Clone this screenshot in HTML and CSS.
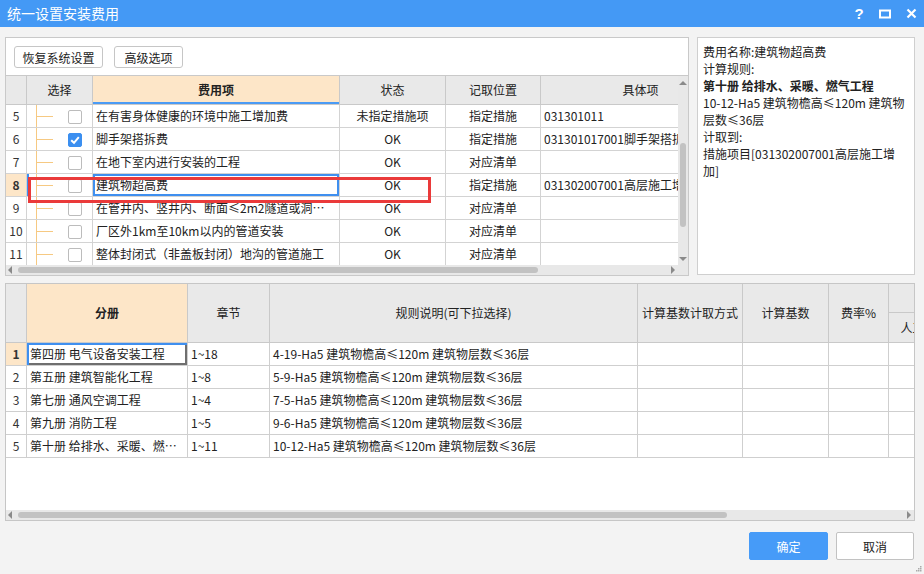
FILE: index.html
```html
<!DOCTYPE html>
<html lang="zh-CN">
<head>
<meta charset="utf-8">
<title>统一设置安装费用</title>
<link rel="stylesheet" href="styles.css">
</head>
<body>
<div class="dialog">
  <div class="titlebar">
    <span class="title">统一设置安装费用</span>
    <div class="win-btns">
      <span class="wbtn help">?</span>
      <span class="wbtn"><svg width="12" height="10" viewBox="0 0 12 10"><rect x="1" y="1.5" width="10" height="7" fill="none" stroke="#fff" stroke-width="2"/></svg></span>
      <span class="wbtn"><svg width="11" height="11" viewBox="0 0 11 11"><path d="M1.5 1.5 L9.5 9.5 M9.5 1.5 L1.5 9.5" stroke="#fff" stroke-width="2.2" fill="none"/></svg></span>
    </div>
  </div>
  <div class="content">
    <div class="top">
      <div class="left-panel">
        <div class="toolbar">
          <button class="btn btn-restore">恢复系统设置</button>
          <button class="btn btn-adv">高级选项</button>
        </div>
        <div class="grid-area up-area">
          <div class="viewport">
            <table class="grid g-up">
              <colgroup><col class="u-num"><col class="u-sel"><col class="u-name"><col class="u-st"><col class="u-pos"><col class="u-item"></colgroup>
              <thead>
                <tr class="hr"><th class="num"></th><th>选择</th><th class="hl hl-line">费用项</th><th>状态</th><th>记取位置</th><th>具体项</th></tr>
              </thead>
              <tbody>
                <tr><td class="num">5</td><td class="sel"><span class="cb"></span></td><td>在有害身体健康的环境中施工增加费</td><td class="c">未指定措施项</td><td class="c">指定措施</td><td>031301011</td></tr>
                <tr><td class="num">6</td><td class="sel"><span class="cb on"><svg width="14" height="14" viewBox="0 0 14 14"><path d="M3.2 7.2 L6 9.8 L10.8 4.2" stroke="#fff" stroke-width="2" fill="none"/></svg></span></td><td>脚手架搭拆费</td><td class="c">OK</td><td class="c">指定措施</td><td>031301017001脚手架搭拆费</td></tr>
                <tr><td class="num">7</td><td class="sel"><span class="cb"></span></td><td>在地下室内进行安装的工程</td><td class="c">OK</td><td class="c">对应清单</td><td></td></tr>
                <tr class="cur"><td class="num cur-num">8</td><td class="sel cur-sel"><span class="cb"></span></td><td class="cur-cell">建筑物超高费</td><td class="c">OK</td><td class="c">指定措施</td><td>031302007001高层施工增加费</td></tr>
                <tr><td class="num">9</td><td class="sel"><span class="cb"></span></td><td>在管井内、竖井内、断面≤2m2隧道或洞内进行安装的工程</td><td class="c">OK</td><td class="c">对应清单</td><td></td></tr>
                <tr><td class="num">10</td><td class="sel"><span class="cb"></span></td><td>厂区外1km至10km以内的管道安装</td><td class="c">OK</td><td class="c">对应清单</td><td></td></tr>
                <tr><td class="num">11</td><td class="sel"><span class="cb"></span></td><td>整体封闭式（非盖板封闭）地沟的管道施工</td><td class="c">OK</td><td class="c">对应清单</td><td></td></tr>
              </tbody>
            </table>
          </div>
          <div class="vscroll">
            <span class="arr-up"></span>
            <span class="vthumb"></span>
            <span class="vspacer"></span>
            <span class="arr-down"></span>
          </div>
          <div class="hscroll up-h">
            <span class="arr-left"></span>
            <span class="hthumb"></span>
            <span class="hspacer"></span>
            <span class="arr-right"></span>
          </div>
          <div class="corner"></div>
        </div>
        <div class="red-box"></div>
      </div>
      <div class="info-panel">
        <div>费用名称:建筑物超高费</div>
        <div>计算规则:</div>
        <div class="b">第十册 给排水、采暖、燃气工程</div>
        <div>10-12-Ha5 建筑物檐高≤120m 建筑物</div>
        <div>层数≤36层</div>
        <div>计取到:</div>
        <div>措施项目[031302007001高层施工增</div>
        <div>加]</div>
      </div>
    </div>

    <div class="lower">
      <div class="grid-area low-area">
        <div class="viewport">
          <table class="grid g-low">
            <colgroup><col class="l-num"><col class="l-book"><col class="l-ch"><col class="l-rule"><col class="l-way"><col class="l-base"><col class="l-rate"><col class="l-sub"><col class="l-sub"><col class="l-sub"></colgroup>
            <thead>
              <tr class="h1"><th class="num" rowspan="2"></th><th class="hl" rowspan="2">分册</th><th rowspan="2">章节</th><th rowspan="2">规则说明(可下拉选择)</th><th rowspan="2">计算基数计取方式</th><th rowspan="2">计算基数</th><th rowspan="2">费率%</th><th colspan="3">其中</th></tr>
              <tr class="h2"><th>人工费</th><th>材料费</th><th>机械费</th></tr>
            </thead>
            <tbody>
              <tr><td class="num cur-num">1</td><td class="cur-cell2">第四册 电气设备安装工程</td><td>1~18</td><td>4-19-Ha5 建筑物檐高≤120m 建筑物层数≤36层</td><td></td><td></td><td></td><td></td><td></td><td></td></tr>
              <tr><td class="num">2</td><td>第五册 建筑智能化工程</td><td>1~8</td><td>5-9-Ha5 建筑物檐高≤120m 建筑物层数≤36层</td><td></td><td></td><td></td><td></td><td></td><td></td></tr>
              <tr><td class="num">3</td><td>第七册 通风空调工程</td><td>1~4</td><td>7-5-Ha5 建筑物檐高≤120m 建筑物层数≤36层</td><td></td><td></td><td></td><td></td><td></td><td></td></tr>
              <tr><td class="num">4</td><td>第九册 消防工程</td><td>1~5</td><td>9-6-Ha5 建筑物檐高≤120m 建筑物层数≤36层</td><td></td><td></td><td></td><td></td><td></td><td></td></tr>
              <tr><td class="num">5</td><td>第十册 给排水、采暖、燃气工程</td><td>1~11</td><td>10-12-Ha5 建筑物檐高≤120m 建筑物层数≤36层</td><td></td><td></td><td></td><td></td><td></td><td></td></tr>
            </tbody>
          </table>
        </div>
        <div class="hscroll low-h">
          <span class="arr-left"></span>
          <span class="hthumb"></span>
          <span class="hspacer"></span>
          <span class="arr-right"></span>
        </div>
      </div>
    </div>

    <div class="footer">
      <button class="btn primary">确定</button>
      <button class="btn cancel">取消</button>
    </div>
  </div>
  <svg class="grip" width="6" height="6" viewBox="0 0 6 6"><rect x="4" y="0" width="1.5" height="1.5" fill="#aaa"/><rect x="2" y="2" width="1.5" height="1.5" fill="#aaa"/><rect x="4" y="2" width="1.5" height="1.5" fill="#aaa"/><rect x="0" y="4" width="1.5" height="1.5" fill="#aaa"/><rect x="2" y="4" width="1.5" height="1.5" fill="#aaa"/><rect x="4" y="4" width="1.5" height="1.5" fill="#aaa"/></svg>
</div>
</body>
</html>
```
FILE: styles.css
```css
* { box-sizing: border-box; }
html, body { margin: 0; padding: 0; }
body {
  width: 924px; height: 574px; overflow: hidden;
  background: #f3f3f3;
  font-family: "Noto Sans CJK SC", "Noto Sans", sans-serif;
  font-size: 12px; color: #222;
}
.dialog { position: relative; width: 924px; height: 574px; display: flex; flex-direction: column; }

/* title bar */
.titlebar { height: 27px; flex: none; background: #4499f5; color: #fff; display: flex; align-items: center; padding-left: 7px; }
.title { flex: 1; font-size: 14px; line-height: 27px; }
.win-btns { display: flex; height: 27px; }
.wbtn { width: 26px; height: 27px; display: flex; align-items: center; justify-content: center; }
.wbtn.help { font-family: "Liberation Sans", sans-serif; font-weight: bold; font-size: 15px; }

.content { flex: 1; display: flex; flex-direction: column; padding: 10px 9px 0 5px; }
.top { display: flex; gap: 8px; align-items: flex-start; height: 239px; flex: none; }

/* left panel */
.left-panel { position: relative; width: 684px; height: 239px; border: 1px solid #c9c9c9; background: #fff; display: flex; flex-direction: column; }
.toolbar { height: 38px; flex: none; border-bottom: 1px solid #c9c9c9; display: flex; gap: 11px; padding: 8px 0 0 8px; background: #fff; }
.btn {
  font-family: inherit; font-size: 12px; color: #222; height: 22px;
  background: #fff; border: 1px solid #c6c6c6; border-radius: 3px; padding: 0;
  display: flex; align-items: center; justify-content: center;
}
.btn-restore { width: 89px; }
.btn-adv { width: 69px; }

.grid-area { display: grid; background: #e8e8e8; }
.up-area { grid-template-columns: 672px 10px; grid-template-rows: 189px 10px; }
.low-area { grid-template-columns: 908px; grid-template-rows: 226px 10px; }
.viewport { overflow: hidden; background: #fff; }

/* grids */
.grid { border-collapse: separate; border-spacing: 0; table-layout: fixed; }
.grid th, .grid td {
  padding: 0 3px; border-right: 1px solid #d3d3d3; border-bottom: 1px solid #d3d3d3;
  white-space: nowrap; overflow: hidden; text-overflow: ellipsis;
  vertical-align: middle; line-height: 16px; font-size: 12px; text-align: left;
}
.grid th { background: #e9e9e9; font-weight: normal; border-color: #c9c9c9; text-align: center; color: #222; }
.grid th.hl { background: #fde6c8; font-weight: bold; }
.grid th.hl-line { box-shadow: inset 0 -2px 0 #4a9bf5; }
.grid td.c { text-align: center; }
.grid .num { text-align: center; padding: 0; color: #333; }
.grid td.cur-num { background: #fde6c8; font-weight: bold; }

.g-up { width: 735px; }
.u-num { width: 21px; }
.u-sel { width: 66px; }
.u-name { width: 247px; }
.u-st { width: 106px; }
.u-pos { width: 95px; }
.u-item { width: 200px; }
.g-up tr.hr { height: 29px; }
.g-up tbody tr { height: 23px; }

.grid td.sel {
  padding: 0 0 0 41px;
  background:
    linear-gradient(#f6c982, #f6c982) no-repeat 9px 0 / 1px 100%,
    linear-gradient(#f6c982, #f6c982) no-repeat 9px 50% / 17px 1px,
    #fff;
}
.grid td.cur-sel { box-shadow: inset 2px 0 0 #3f8fef; }
.grid td.cur-cell { box-shadow: inset 0 0 0 2px #3f8fef; }
.cb { display: inline-block; width: 14px; height: 14px; border: 1px solid #bcbcbc; border-radius: 2px; background: #fff; vertical-align: middle; position: relative; }
.cb.on { background: #3b8ff0; border-color: #3b8ff0; }
.cb.on svg { display: block; margin: -1px 0 0 -1px; }

.red-box { position: absolute; left: 22px; top: 139px; width: 403px; height: 26px; border: 3px solid #ea3a3a; pointer-events: none; }

/* scrollbars */
.vscroll { display: flex; flex-direction: column; align-items: center; background: #e8e8e8; padding: 5px 0 4px; }
.arr-up { width: 0; height: 0; border-left: 4px solid transparent; border-right: 4px solid transparent; border-bottom: 4px solid #8a8a8a; }
.arr-down { width: 0; height: 0; border-left: 4px solid transparent; border-right: 4px solid transparent; border-top: 4px solid #8a8a8a; }
.vthumb { width: 6px; height: 84px; margin-top: 58px; background: #c2c2c2; border-radius: 3px; }
.vspacer { flex: 1; }
.hscroll { display: flex; align-items: center; background: #e8e8e8; padding: 0 3px 0 2px; }
.arr-left { width: 0; height: 0; border-top: 4px solid transparent; border-bottom: 4px solid transparent; border-right: 4px solid #8a8a8a; }
.arr-right { width: 0; height: 0; border-top: 4px solid transparent; border-bottom: 4px solid transparent; border-left: 4px solid #8a8a8a; }
.hthumb { height: 6px; margin-left: 6px; background: #c2c2c2; border-radius: 3px; }
.up-h .hthumb { width: 520px; }
.low-h .hthumb { width: 709px; }
.hspacer { flex: 1; }
.corner { background: #e8e8e8; }

/* info panel */
.info-panel { width: 218px; height: 238px; border: 1px solid #cfcfcf; background: #fff; padding: 5px 0 0 5px; line-height: 17px; font-size: 12px; color: #222; white-space: nowrap; }
.info-panel .b { font-weight: bold; }

/* lower grid */
.lower { margin-top: 7px; width: 910px; height: 238px; border: 1px solid #c6c6c6; flex: none; }
.g-low { width: 1063px; }
.l-num { width: 21px; }
.l-book { width: 161px; }
.l-ch { width: 82px; }
.l-rule { width: 368px; }
.l-way { width: 105px; }
.l-base { width: 86px; }
.l-rate { width: 60px; }
.l-sub { width: 60px; }
.g-low tr.h1 { height: 29px; }
.g-low tr.h2 { height: 30px; }
.g-low tbody tr { height: 23px; }
.g-low td { border-color: #cfcfcf; }
.grid td.cur-cell2 { box-shadow: inset 2px 2px 0 #3f8fef, inset -2px -2px 0 #6f6f6f; }

/* footer */
.footer { display: flex; justify-content: flex-end; gap: 8px; margin-top: 11px; padding-right: 1px; }
.footer .btn { height: 28px; border-radius: 2px; }
.btn.primary { width: 79px; background: #469bf8; border-color: #469bf8; color: #fff; }
.btn.cancel { width: 78px; border-color: #c2c2c2; }

.grip { position: absolute; right: 2px; bottom: 2px; }
```
